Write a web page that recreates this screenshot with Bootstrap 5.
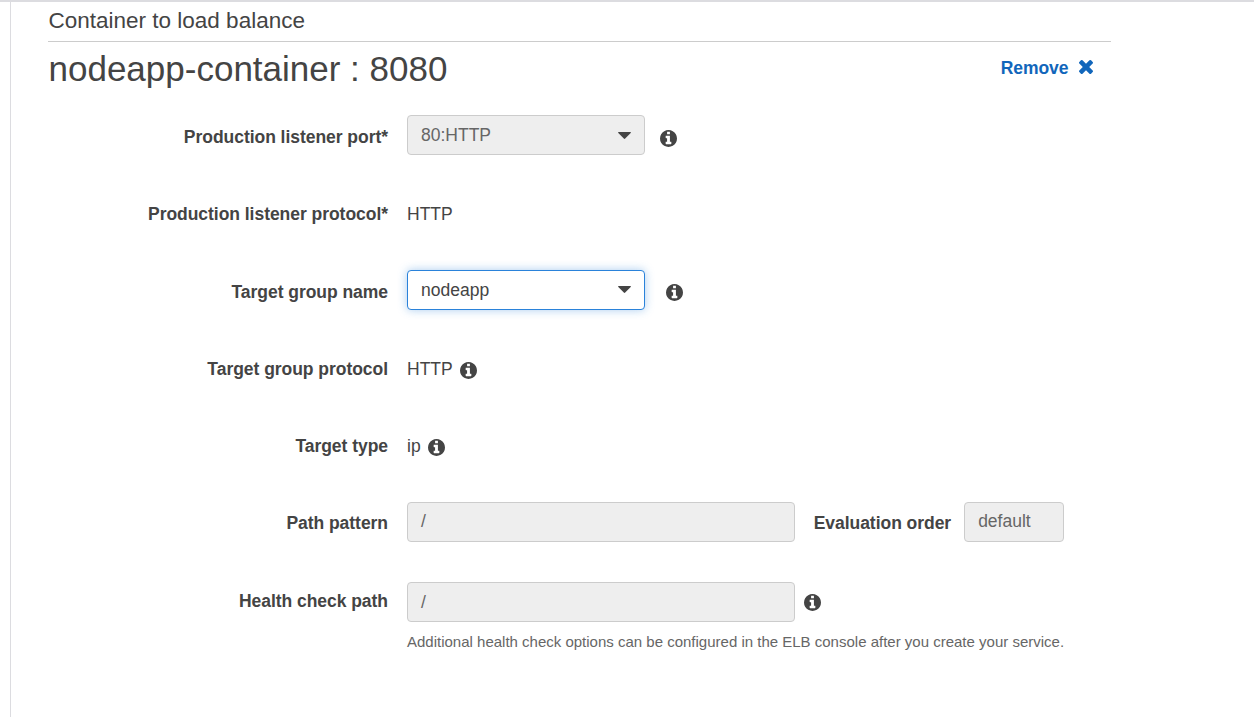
<!DOCTYPE html>
<html lang="en">
<head>
<meta charset="utf-8">
<title>Container to load balance</title>
<link href="https://cdn.jsdelivr.net/npm/bootstrap@5.3.0/dist/css/bootstrap.min.css" rel="stylesheet">
<style>
body{font-family:"Liberation Sans",Arial,sans-serif;font-size:17.5px;line-height:20px;color:#444;background:#fff}
.page{height:717px;border-top:2px solid #dcdce0;padding-left:10px}
.pane{border-left:1px solid #dcdce0;padding-left:37px}
.section{width:1063px}
.section-title{font-size:22.5px;line-height:26px;padding:6px 0 0 .5px;height:40px;border-bottom:1px solid #ccc}
.target-head{height:73px;padding:7px 18px 0 .5px}
.target-name{font-size:35px;line-height:40px}
.remove{color:#1166bb;font-weight:700;text-decoration:none;margin-top:9px;gap:10.5px;letter-spacing:-.04px}
.remove svg{margin-top:2px}
.line{height:40px;margin-bottom:37px}
.line-tall{margin-bottom:38px}
.line-wide{margin-bottom:40px}
.name{width:340px;text-align:right;font-weight:700;letter-spacing:-.04px;margin-right:19px;padding-top:12px}
.name-up{padding-top:11px}
.name-check{padding-top:9px}
.name-order{width:auto;margin:0 13px 0 18.7px}
.value{padding-top:11px}
.box{height:40px;border:1px solid #ccc;border-radius:4px;background:#eee;color:#666;padding:9px 13px}
.box.pick{width:238px}
.box.pick svg{margin-top:7px}
.box.pick.active svg{margin-top:6px}
.box.path{width:388px}
.box.order{width:100px}
.box.raised{padding-top:8px}
.box.active{background:#fff;color:#444;border-color:#2a82da;box-shadow:0 0 10px rgba(42,130,218,.4)}
.info{width:17px;height:17px;fill:#444;flex:none;margin:14px 0 0 7.5px}
.info-port{margin:15px 0 0 15px}
.info-group{margin:14px 0 0 21px}
.info-check{margin:12px 0 0 9px}
.hint{font-size:15px;line-height:20px;color:#666;margin:-30px 0 0 359px;white-space:nowrap}
</style>
</head>
<body>
<svg class="d-none" xmlns="http://www.w3.org/2000/svg">
<symbol id="info" viewBox="128 128 1536 1536"><path d="M1152 1376v-160q0-14-9-23t-23-9h-96v-512q0-14-9-23t-23-9h-320q-14 0-23 9t-9 23v160q0 14 9 23t23 9h96v320h-96q-14 0-23 9t-9 23v160q0 14 9 23t23 9h448q14 0 23-9t9-23zm-128-896v-160q0-14-9-23t-23-9h-192q-14 0-23 9t-9 23v160q0 14 9 23t23 9h192q14 0 23-9t9-23zm640 416q0 209-103 385.5t-279.5 279.5-385.5 103-385.5-103-279.5-279.5-103-385.5 103-385.5 279.5-279.5 385.5-103 385.5 103 279.5 279.5 103 385.5z"/></symbol>
</svg>
<main class="page">
<div class="pane h-100">
<section class="section">
<h2 class="section-title fw-normal mb-0">Container to load balance</h2>
<div class="target-head d-flex justify-content-between align-items-start">
<h1 class="target-name fw-normal mb-0">nodeapp-container : 8080</h1>
<a href="#" class="remove d-flex">Remove<svg width="14" height="14" viewBox="302 366 1188 1188" fill="currentColor"><path d="M1490 1322q0 40-28 68l-136 136q-28 28-68 28t-68-28l-294-294-294 294q-28 28-68 28t-68-28l-136-136q-28-28-28-68t28-68l294-294-294-294q-28-28-28-68t28-68l136-136q28-28 68-28t68 28l294 294 294-294q28-28 68-28t68 28l136 136q28 28 28 68t-28 68l-294 294 294 294q28 28 28 68z"/></svg></a>
</div>
<div class="line line-tall d-flex align-items-start">
<div class="name">Production listener port*</div>
<div class="box pick d-flex justify-content-between"><span>80:HTTP</span><svg width="13" height="7" viewBox="0 0 13 7" fill="#444"><path d="M.7 0h11.6q1 .2.4 1L7.2 6.6q-.7.6-1.4 0L.3 1Q-.3.2.7 0z"/></svg></div>
<svg class="info info-port"><use href="#info"/></svg>
</div>
<div class="line d-flex align-items-start">
<div class="name name-up">Production listener protocol*</div><div class="value">HTTP</div>
</div>
<div class="line line-tall d-flex align-items-start">
<div class="name">Target group name</div>
<div class="box pick active d-flex justify-content-between"><span>nodeapp</span><svg width="13" height="7" viewBox="0 0 13 7" fill="#444"><path d="M.7 0h11.6q1 .2.4 1L7.2 6.6q-.7.6-1.4 0L.3 1Q-.3.2.7 0z"/></svg></div>
<svg class="info info-group"><use href="#info"/></svg>
</div>
<div class="line d-flex align-items-start">
<div class="name name-up">Target group protocol</div><div class="value">HTTP</div>
<svg class="info"><use href="#info"/></svg>
</div>
<div class="line d-flex align-items-start">
<div class="name name-up">Target type</div><div class="value">ip</div>
<svg class="info"><use href="#info"/></svg>
</div>
<div class="line line-wide d-flex align-items-start">
<div class="name name-up">Path pattern</div><div class="box path raised">/</div>
<div class="name name-up name-order">Evaluation order</div><div class="box order raised">default</div>
</div>
<div class="line line-wide d-flex align-items-start">
<div class="name name-check">Health check path</div><div class="box path">/</div>
<svg class="info info-check"><use href="#info"/></svg>
</div>
<p class="hint">Additional health check options can be configured in the ELB console after you create your service.</p>
</section>
</div>
</main>
<script src="https://cdn.jsdelivr.net/npm/bootstrap@5.3.0/dist/js/bootstrap.bundle.min.js"></script>
</body>
</html>
